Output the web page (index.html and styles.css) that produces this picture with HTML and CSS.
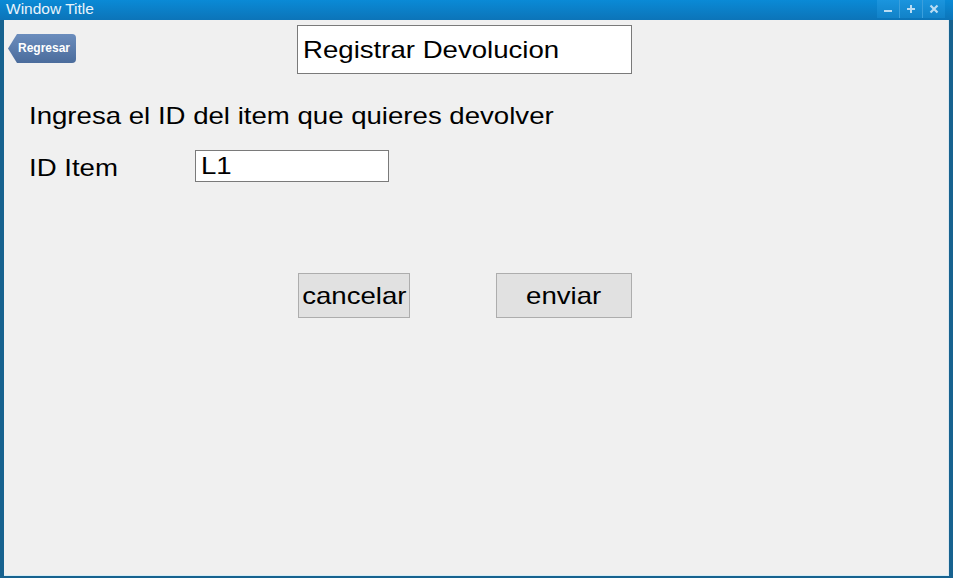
FILE: index.html
```html
<!DOCTYPE html>
<html>
<head>
<meta charset="utf-8">
<link rel="stylesheet" href="styles.css">
</head>
<body>
<div class="window">
  <div class="titlebar">
    <span class="title">Window Title</span>
    <div class="controls">
      <span class="ctl"><svg width="10" height="10" viewBox="0 0 10 10"><rect x="1" y="6" width="8" height="2" fill="#b9dcf3"/></svg></span>
      <span class="ctl"><svg width="10" height="10" viewBox="0 0 10 10"><path d="M4 1h2v3h3v2H6v3H4V6H1V4h3z" fill="#b9dcf3"/></svg></span>
      <span class="ctl"><svg width="10" height="10" viewBox="0 0 10 10"><path d="M1.5 1.5l7 7M8.5 1.5l-7 7" stroke="#b9dcf3" stroke-width="2.2"/></svg></span>
    </div>
  </div>
  <div class="client">
    <div class="toprow">
      <div class="back">Regresar</div>
      <div class="titlebox"><span class="wide">Registrar Devolucion</span></div>
    </div>
    <div class="prompt"><span class="wide">Ingresa el ID del item que quieres devolver</span></div>
    <div class="field">
      <span class="label"><span class="wide">ID Item</span></span>
      <div class="input"><span class="wide">L1</span></div>
    </div>
    <div class="actions">
      <div class="btn cancel"><span class="wide mid">cancelar</span></div>
      <div class="btn send"><span class="wide mid">enviar</span></div>
    </div>
  </div>
</div>
</body>
</html>
```

FILE: styles.css
```css
* { box-sizing: border-box; }
html, body { margin: 0; padding: 0; }
body {
  width: 953px;
  height: 578px;
  overflow: hidden;
  font-family: "Liberation Sans", Arial, sans-serif;
  background: #f0f0f0;
}
.window {
  width: 953px;
  height: 578px;
  display: flex;
  flex-direction: column;
  background: #17628f;
}
.titlebar {
  height: 20px;
  flex: none;
  display: flex;
  align-items: flex-start;
  justify-content: space-between;
  background: linear-gradient(#0a8ad6, #0c74b8);
  color: #ffffff;
}
.title {
  font-size: 15.5px;
  line-height: 18px;
  padding-left: 6px;
  color: #e8f4fc;
}
.controls {
  display: flex;
  gap: 1px;
  margin-right: 8px;
  height: 18px;
  background: #3b9fdc;
}
.ctl {
  width: 22px;
  height: 18px;
  display: flex;
  align-items: center;
  justify-content: center;
  background: linear-gradient(#1b95de, #1282c8);
}
.client {
  flex: 1;
  margin: 0 4px 2px 4px;
  background: #f0f0f0;
  border-right: 1px solid #dde8f0;
  border-bottom: 1px solid #d6eef8;
  display: flex;
  flex-direction: column;
}
.wide {
  display: inline-block;
  transform: scaleX(1.15);
  transform-origin: left center;
  white-space: nowrap;
}
.wide.mid { transform-origin: center center; }
.toprow {
  display: flex;
  align-items: flex-start;
  padding-top: 5px;
}
.back {
  margin-left: 4px;
  margin-top: 9px;
  width: 68px;
  height: 29px;
  background: linear-gradient(#6b8dbd, #4b6c9c);
  color: #ffffff;
  font-weight: bold;
  font-size: 12px;
  line-height: 29px;
  padding-left: 10px;
  border-radius: 0 4px 4px 0;
  clip-path: polygon(9px 0, 100% 0, 100% 100%, 9px 100%, 0 50%);
}
.titlebox {
  margin-left: 221px;
  width: 335px;
  height: 49px;
  background: #ffffff;
  border: 1px solid #7a7a7a;
  font-size: 24px;
  line-height: 47px;
  padding-left: 5px;
  color: #000;
}
.prompt {
  margin-top: 24px;
  margin-left: 25px;
  font-size: 24px;
  line-height: 35px;
  color: #000;
}
.field {
  display: flex;
  align-items: center;
  margin-top: 16px;
  margin-left: 25px;
}
.label {
  font-size: 24px;
  width: 166px;
  line-height: 31px;
  margin-top: 3px;
}
.input {
  width: 194px;
  height: 32px;
  background: #fff;
  border: 1px solid #7a7a7a;
  font-size: 24px;
  line-height: 30px;
  padding-left: 5px;
}
.actions {
  display: flex;
  margin-top: 90px;
  margin-left: 294px;
  gap: 86px;
}
.btn {
  height: 45px;
  background: #e1e1e1;
  border: 1px solid #adadad;
  font-size: 24px;
  line-height: 43px;
  text-align: center;
  color: #000;
}
.cancel { width: 112px; }
.send { width: 136px; }
```
